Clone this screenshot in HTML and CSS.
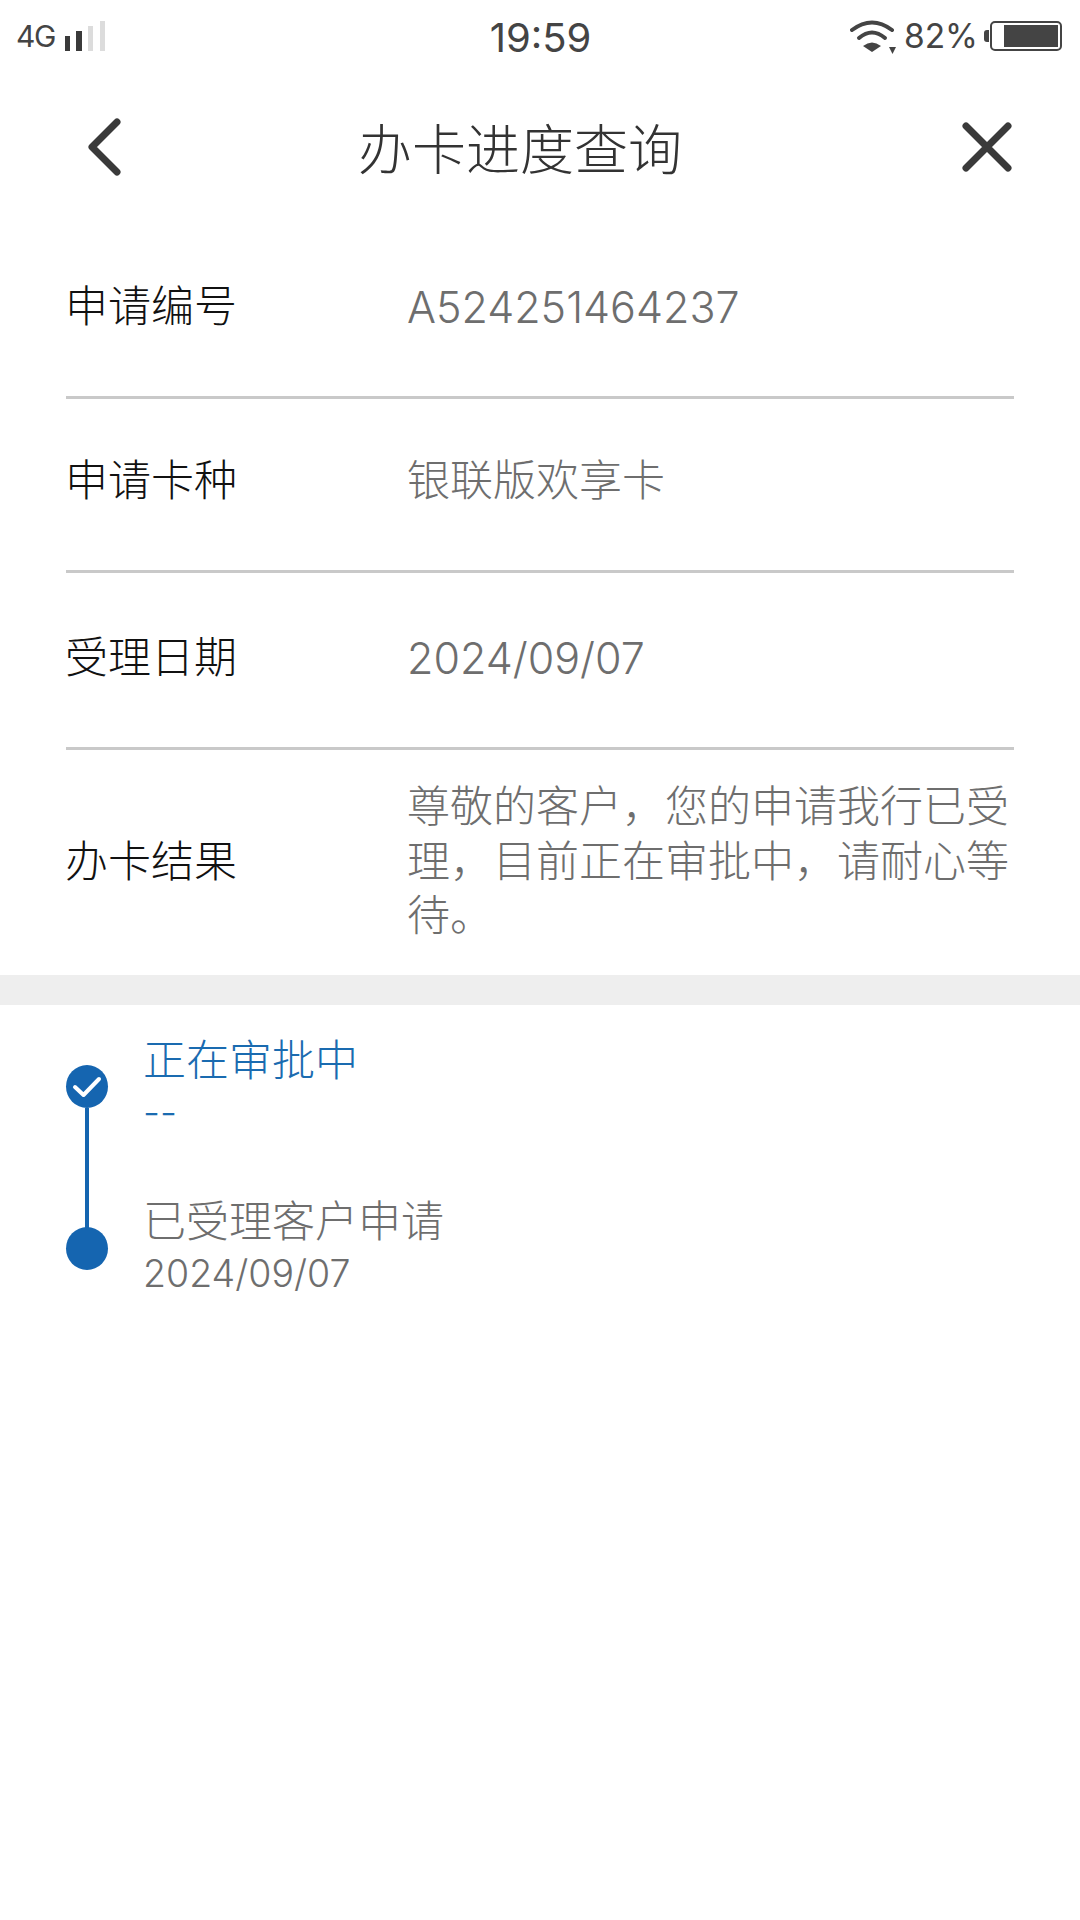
FILE: index.html
```html
<!DOCTYPE html>
<html lang="zh-CN">
<head>
<meta charset="utf-8">
<title>办卡进度查询</title>
<link rel="stylesheet" href="styles.css">
</head>
<body>
<div class="status">
  <div class="status-left">
    <span class="net">4G</span>
    <svg class="signal" width="40" height="30" viewBox="0 0 40 30"><rect x="0" y="15" width="5" height="15" fill="#3a3a3a"/><rect x="11" y="10" width="6" height="20" fill="#3a3a3a"/><rect x="23" y="5" width="5" height="25" fill="#dcdcdc"/><rect x="35" y="0" width="5" height="30" fill="#dcdcdc"/></svg>
  </div>
  <div class="time">19:59</div>
  <div class="status-right">
    <svg class="wifi" width="46" height="34" viewBox="0 0 46 34"><g fill="none" stroke="#444" stroke-width="4" stroke-linecap="round"><path d="M2 10 Q22 -5 42 10"/><path d="M9 18 Q22 7 35 18"/></g><path d="M22 32 L13 26 Q22 19 31 26 Z" fill="#444"/><path d="M39 27 H46 L42.500 34 Z" fill="#444"/></svg>
    <span class="pct">82%</span>
    <div class="battery"><span class="cap"></span><div class="shell"><div class="fill"></div></div></div>
  </div>
</div>

<header class="nav">
  <svg class="back" width="36" height="58" viewBox="0 0 36 58"><path d="M31 4 L6 29 L31 54" fill="none" stroke="#3a3a3a" stroke-width="7" stroke-linecap="round" stroke-linejoin="round"/></svg>
  <h1 class="title">办卡进度查询</h1>
  <svg class="close" width="50" height="50" viewBox="0 0 50 50"><path d="M4 4 L46 46 M46 4 L4 46" fill="none" stroke="#3a3a3a" stroke-width="7" stroke-linecap="round"/></svg>
</header>

<section class="info">
  <div class="row r1"><div class="label">申请编号</div><div class="value latin">A524251464237</div></div>
  <div class="row r2"><div class="label">申请卡种</div><div class="value">银联版欢享卡</div></div>
  <div class="row r3"><div class="label">受理日期</div><div class="value latin">2024/09/07</div></div>
  <div class="row r4"><div class="label">办卡结果</div><div class="value multi">尊敬的客户，您的申请我行已受理，目前正在审批中，请耐心等待。</div></div>
</section>

<div class="band"></div>

<section class="timeline">
  <div class="step">
    <div class="rail">
      <span class="dot"><svg width="30" height="24" viewBox="0 0 30 24"><path d="M3 12 L11.500 20 L27 4" fill="none" stroke="#fff" stroke-width="4" stroke-linecap="round" stroke-linejoin="round"/></svg></span>
      <span class="line"></span>
    </div>
    <div class="body active">
      <div class="step-title">正在审批中</div>
      <div class="step-date">--</div>
    </div>
  </div>
  <div class="step last">
    <div class="rail"><span class="dot"></span></div>
    <div class="body">
      <div class="step-title">已受理客户申请</div>
      <div class="step-date">2024/09/07</div>
    </div>
  </div>
</section>
</body>
</html>
```
FILE: styles.css
```css
* { box-sizing: border-box; }
html, body { margin: 0; padding: 0; }
body {
  width: 1080px;
  height: 1920px;
  background: #fff;
  overflow: hidden;
  font-family: "Noto Sans CJK SC", sans-serif;
  font-weight: 300;
}
.status {
  height: 72px;
  padding: 0 18px 0 16px;
  display: grid;
  grid-template-columns: 1fr auto 1fr;
  align-items: center;
  color: #444;
}
.status-left { display: flex; align-items: center; gap: 10px; }
.net { font-family: "Inter", sans-serif; font-weight: 400; font-size: 30px; letter-spacing: -1.500px; }
.time { font-family: "Inter", sans-serif; font-weight: 400; font-size: 40px; color: #444; margin: 2px 0 0 3px; }
.status-right { display: flex; align-items: center; justify-content: flex-end; gap: 8px; }
.wifi { margin-top: 1px; }
.pct { font-family: "Inter", sans-serif; font-weight: 400; font-size: 33.500px; }
.battery { display: flex; align-items: center; margin-left: -2px; }
.cap { width: 5px; height: 12px; background: #444; border-radius: 3px 0 0 3px; margin-right: 1px; }
.shell { width: 72px; height: 30px; border: 2.500px solid #444; border-radius: 5px; padding: 2px 2px 2px 12px; }
.fill { height: 100%; background: #444; }

.nav {
  height: 150px;
  padding: 0 68px 0 86px;
  display: flex;
  align-items: center;
  justify-content: space-between;
}
.title { margin: 0 44px 0 0; font-size: 54px; font-weight: 300; color: #333; line-height: 1; }

.info { padding: 0 66px; }
.row {
  display: flex;
  align-items: center;
  border-bottom: 3px solid #c9c9c9;
}
.r1 { height: 177px; padding-bottom: 13px; }
.r2 { height: 174px; padding-bottom: 16px; }
.r3 { height: 177px; padding-bottom: 13px; }
.r4 { height: 225px; padding-bottom: 9px; border-bottom: 0; }
.label { width: 342px; margin-left: -1px; flex: none; font-size: 43px; color: #111; }
.value { font-size: 43px; color: #6e6e6e; line-height: 56px; }
.latin { font-family: "Inter", sans-serif; font-size: 43px; margin-top: 8px; }
.multi { line-height: 54.500px; }

.band { height: 30px; background: #eeeeee; }

.timeline { padding: 24px 66px 0; }
.step { display: flex; height: 161px; }
.step.last { height: auto; }
.rail {
  width: 78px;
  flex: none;
  padding-top: 36px;
  display: flex;
  flex-direction: column;
  align-items: flex-start;
}
.step.last .rail { padding-top: 37px; }
.dot {
  width: 42px;
  height: 43px;
  border-radius: 50%;
  background: #1565b0;
  display: flex;
  align-items: center;
  justify-content: center;
  flex: none;
}
.line { width: 4px; flex: 1; background: #1565b0; margin: 0 0 -38px 19px; }
.body { margin-left: -1px; }
.step-title { font-size: 43px; color: #6e6e6e; line-height: 56px; }
.step-date { font-family: "Inter", sans-serif; font-size: 37.500px; color: #6e6e6e; line-height: 50px; margin-top: 3px; }
.active .step-title, .active .step-date { color: #1a6bb0; }
```
